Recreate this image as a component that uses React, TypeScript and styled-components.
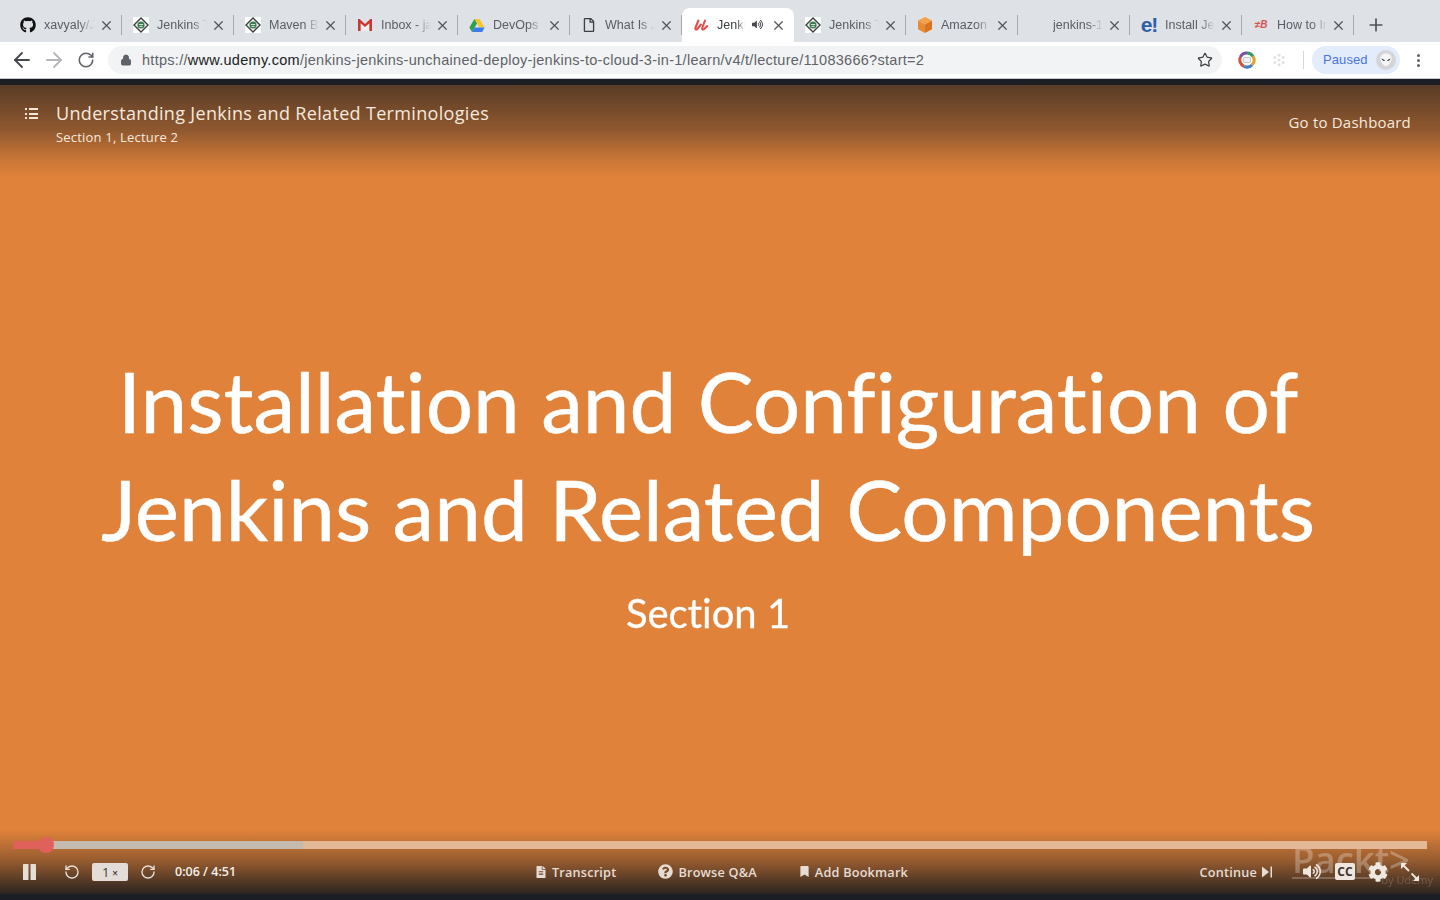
import React from "react";
import styled, { createGlobalStyle } from "styled-components";
import { X, ArrowLeft, ArrowRight, RotateCw, RotateCcw, Star, Plus, Lock } from "lucide-react";
import { FaGithub, FaRegFile, FaFileAlt, FaQuestionCircle, FaBookmark, FaCog, FaVolumeUp } from "react-icons/fa";

const Global = createGlobalStyle`
  html, body { margin: 0; padding: 0; height: 100%; overflow: hidden; background: #14181d; }
  #root { height: 100%; }
`;

const Page = styled.div`
  width: 1440px; height: 900px; display: flex; flex-direction: column;
  background: #161a20; font-family: "Open Sans", sans-serif;
`;
const TabBar = styled.div`
  height: 42px; box-sizing: border-box; padding: 8px 0 0 9px; background: #dee1e6;
  display: flex; align-items: stretch; flex: none;
`;
const Tab = styled.div<{ $active?: boolean }>`
  width: 112px; height: 34px; box-sizing: border-box; position: relative; flex: none;
  display: flex; align-items: center; padding-left: 11px;
  background: ${p => (p.$active ? "#fff" : "transparent")};
  border-radius: ${p => (p.$active ? "8px 8px 0 0" : "0")};
  &:first-child { width: 113px; }
  &::after {
    content: ""; position: absolute; right: 0; top: 7px; width: 1px; height: 20px;
    background: ${p => (p.$active ? "transparent" : "#a5a8ad")};
  }
`;
const Favicon = styled.span`
  width: 16px; height: 16px; flex: none; display: flex; align-items: center; justify-content: center;
`;
const TabTitle = styled.span<{ $w: number; $active?: boolean }>`
  width: ${p => p.$w}px; margin-left: 8px; overflow: hidden; white-space: nowrap; flex: none;
  font: 12.5px/16px "Liberation Sans", sans-serif; color: ${p => (p.$active ? "#3c4043" : "#5a5e63")};
  -webkit-mask-image: linear-gradient(90deg, #000 70%, transparent 100%);
  mask-image: linear-gradient(90deg, #000 70%, transparent 100%);
`;
const TabClose = styled.span`
  position: absolute; right: 8px; top: 9px; width: 16px; height: 16px; display: flex; align-items: center; justify-content: center; color: #55585c;
`;
const Speaker = styled.span`
  position: absolute; left: 70px; top: 11px; width: 12px; height: 12px; display: flex; color: #45484c;
`;
const NewTab = styled.span`
  width: 44px; height: 34px; display: flex; align-items: center; justify-content: center; color: #4f5357; flex: none;
`;
const LetterIcon = styled.span`
  font: bold 21px/16px "Liberation Sans", sans-serif; color: #2f5fa8; letter-spacing: -1px;
`;
const RedB = styled.span`
  font: italic bold 10px/16px "Liberation Sans", sans-serif; color: #d9534f;
`;
const ToolBar = styled.div`
  height: 36px; background: #fff; flex: none; display: flex; align-items: center; padding-left: 6px;
  border-bottom: 1px solid #c6c8cb;
`;
const NavButton = styled.span<{ $muted?: boolean }>`
  width: 32px; height: 24px; display: flex; align-items: center; justify-content: center; flex: none;
  color: ${p => (p.$muted ? "#b4b6b9" : "#5f6368")};
`;
const UrlPill = styled.div`
  margin-left: 6px; width: 1114px; height: 28px; border-radius: 14px; background: #f1f3f4; flex: none;
  display: flex; align-items: center; padding: 0 9px 0 12px; box-sizing: border-box;
`;
const LockSlot = styled.span`
  width: 12px; display: flex; color: #5f6368; margin-right: 10px;
`;
const Url = styled.span`
  flex: 1; font: 14.5px/28px "Liberation Sans", sans-serif; color: #5f6368; white-space: nowrap; letter-spacing: .28px;
  b { font-weight: 400; color: #202124; }
`;
const ExtSlot = styled.span<{ $ml: number }>`
  width: 18px; height: 18px; margin-left: ${p => p.$ml}px; display: flex; flex: none;
`;
const ToolSep = styled.span`
  width: 1px; height: 18px; background: #d4d6d8; margin-left: 15px; flex: none;
`;
const PausedPill = styled.div`
  margin-left: 8px; width: 88px; height: 28px; border-radius: 14px; background: #e3ecfb; flex: none;
  display: flex; align-items: center; justify-content: space-between; padding: 0 4px 0 11px; box-sizing: border-box;
  font: 13px/28px "Liberation Sans", sans-serif; color: #4a74e0; letter-spacing: .1px;
`;
const Avatar = styled.span`
  width: 20px; height: 20px; display: flex;
`;
const Dots = styled.span`
  width: 3px; height: 13px; margin-left: 17px; display: flex; flex-direction: column; justify-content: space-between;
  i { width: 3px; height: 3px; border-radius: 50%; background: #5f6368; display: block; }
`;
const Strip = styled.div`
  height: 6px; background: #1b1f25; flex: none;
`;
const Video = styled.main`
  flex: 1; min-height: 0; position: relative; display: flex; flex-direction: column; color: #fff;
  background:
    linear-gradient(180deg, rgba(89,60,39,1) 0, rgba(89,60,39,.6) 45px, rgba(89,60,39,.2) 72px, rgba(89,60,39,0) 92px),
    linear-gradient(0deg, rgba(43,36,32,1) 0, rgba(43,36,32,.4) 34px, rgba(43,36,32,0) 64px),
    #e0823a;
`;
const Header = styled.header`
  display: flex; justify-content: space-between; padding: 16px 29px 0 25px; flex: none;
`;
const TitleWrap = styled.div`
  display: flex; gap: 18px;
`;
const ListIcon = styled.span`
  width: 13px; height: 11px; margin-top: 7px; display: flex; flex-direction: column; justify-content: space-between; flex: none;
  i { display: block; height: 2px; background: linear-gradient(90deg, #f6e6d8 2.5px, transparent 2.5px, transparent 4.5px, #f6e6d8 4.5px); }
`;
const LectureTitle = styled.div`
  font-size: 18px; line-height: 24px; color: #f6e9de; white-space: nowrap; letter-spacing: .33px;
`;
const LectureSub = styled.div`
  font-size: 13px; line-height: 18px; margin-top: 3px; color: #f6e9de; white-space: nowrap; letter-spacing: .2px;
`;
const Dashboard = styled.div`
  font-size: 15px; line-height: 20px; margin-top: 11px; color: #f6e9de; white-space: nowrap; letter-spacing: .2px;
`;
const Slide = styled.section`
  flex: 1; min-height: 0; display: flex; flex-direction: column; align-items: center;
  padding: 202px 24px 0 0; font-family: Lato, sans-serif; filter: blur(.7px);
  font-variant-ligatures: none; -webkit-text-stroke: .5px #fff;
`;
const SlideLine = styled.div`
  font-size: 83.7px; line-height: 108px; white-space: nowrap; color: #fff; margin-top: -1px; margin-bottom: 1px;
`;
const SlideSub = styled.div`
  font-size: 40px; line-height: 50px; margin-top: 24px; color: #fff; white-space: nowrap; -webkit-text-stroke: .3px #fff;
`;
const Track = styled.div`
  height: 8px; margin: 0 13px; background: #e3b897; position: relative; flex: none;
`;
const Buffered = styled.div`
  height: 8px; background: #c5bab0;
`;
const Played = styled.div`
  position: absolute; left: 0; top: 0; height: 8px; background: #e0605c;
`;
const Knob = styled.div`
  position: absolute; top: -4px; width: 16px; height: 16px; margin-left: -8px; border-radius: 50%; background: #e0605c;
`;
const Controls = styled.div`
  height: 45px; flex: none; display: grid; grid-template-columns: 1fr auto 1fr; align-items: center; padding: 0 20px 0 23px;
  font-size: 12.7px; font-weight: 600; color: #e6dcd3;
`;
const LeftGroup = styled.div`
  display: flex; align-items: center;
`;
const CenterGroup = styled.div`
  display: flex; align-items: center; gap: 42px;
`;
const RightGroup = styled.div`
  display: flex; align-items: center; justify-content: flex-end; position: relative; z-index: 1;
`;
const IconSlot = styled.span<{ $ml?: number; $w?: number }>`
  display: flex; margin-left: ${p => p.$ml ?? 0}px; width: ${p => p.$w ?? 16}px; flex: none; align-items: center; justify-content: center;
`;
const Speed = styled.span`
  width: 36px; height: 18px; margin-left: 12px; border-radius: 2px; background: #e3dcd7; color: #3f3a36;
  font-size: 13px; font-weight: 400; line-height: 18px; text-align: center; flex: none;
  small { font-size: 10px; font-weight: 600; margin-left: 3px; }
`;
const Time = styled.span`
  margin-left: 19px; color: #f4efe9; white-space: nowrap; font-size: 12.5px;
`;
const Action = styled.span`
  display: flex; align-items: center; gap: 5px; white-space: nowrap; letter-spacing: .2px;
`;
const CC = styled.span`
  margin-left: 14px; width: 20px; height: 17px; border-radius: 2px; background: #eee7e0; color: #3b342f;
  font: bold 12px/17px "Open Sans", sans-serif; text-align: center; flex: none;
`;
const Watermark = styled.div`
  position: absolute; right: 30px; bottom: 16px; font: 600 36.5px/38px "Open Sans", sans-serif; color: rgba(255,255,255,.27);
  white-space: nowrap; filter: blur(.5px);
  &::after { content: ""; position: absolute; left: 0; right: 25px; bottom: -1px; height: 2px; background: rgba(255,255,255,.22); }
  small { position: absolute; right: -23px; bottom: -8px; font-size: 11px; font-weight: 400; line-height: 12px; color: rgba(255,255,255,.18); }
`;

const JenkinsIcon = () => (
  <svg width="16" height="16" viewBox="0 0 16 16">
    <rect width="16" height="16" fill="#fff" />
    <path d="M8 1 15 8 8 15 1 8Z" fill="#f4f4f4" stroke="#3d3f40" strokeWidth="1.4" />
    <circle cx="8" cy="8" r="3.6" fill="#3f7d52" />
    <path d="M6 7.5h4M6.5 9.5h3" stroke="#dfeee4" strokeWidth=".9" />
  </svg>
);
const GmailIcon = () => (
  <svg width="16" height="14" viewBox="0 0 16 14">
    <path d="M3.600 13V5.200L8 9l4.400-3.800V13Z" fill="#eeeeee" />
    <path d="M1 13V1h1.600L8 6l5.400-5H15v12h-2.600V5.200L8 9 3.600 5.200V13Z" fill="#c8382e" />
  </svg>
);
const DriveIcon = () => (
  <svg width="16" height="15" viewBox="0 0 16 15">
    <path d="M5.400 1h5.200l5 8.600h-5.200Z" fill="#f7c52b" />
    <path d="M5.400 1 .4 9.600 3 14l5-8.600Z" fill="#2ba24c" />
    <path d="M3 14h10.200l2.400-4.400H5.400Z" fill="#3b7ded" />
  </svg>
);
const UdemyIcon = () => (
  <svg width="16" height="16" viewBox="0 0 16 16" fill="none" stroke="#e2504c" strokeWidth="2.1" strokeLinecap="round" strokeLinejoin="round">
    <path d="M5.400 3.500 2.400 11c-.5 1.500 1 2 2 1L8 7.500" />
    <path d="M12 3.500 9.200 11c-.5 1.500.8 2 2 1l3-3" />
  </svg>
);
const CubeIcon = () => (
  <svg width="16" height="16" viewBox="0 0 16 16">
    <path d="M8 0 15 3.600 8 7.400 1 3.600Z" fill="#f5a04b" />
    <path d="M1 3.600 8 7.400V16L1 12.200Z" fill="#ea8b33" />
    <path d="M15 3.600 8 7.400V16l7-3.800Z" fill="#d67422" />
  </svg>
);
const ChromeExt = () => (
  <svg width="18" height="18" viewBox="0 0 18 18" fill="none" strokeWidth="3">
    <path d="M9 2a7 7 0 0 1 6 3.400" stroke="#2f9e57" />
    <path d="M15 5.400A7 7 0 0 1 14 14" stroke="#e2a12a" />
    <path d="M14 14a7 7 0 0 1-8 1.300" stroke="#3b7fc4" />
    <path d="M6 15.300A7 7 0 0 1 2.400 6" stroke="#d8503f" />
    <path d="M2.400 6A7 7 0 0 1 9 2" stroke="#7c4aa8" />
    <rect x="5.500" y="6.500" width="7" height="5" rx="1" fill="#f2f2f2" stroke="#b5b5b5" strokeWidth=".8" />
  </svg>
);
const FlakeExt = () => (
  <svg width="18" height="18" viewBox="0 0 18 18" fill="#e0e1e2">
    {[0, 60, 120, 180, 240, 300].map(a => (
      <circle key={a} cx={9 + 4.800 * Math.cos(((a + 30) * Math.PI) / 180)} cy={9 + 4.800 * Math.sin(((a + 30) * Math.PI) / 180)} r="1.500" />
    ))}
    <circle cx="9" cy="9" r="1.600" />
  </svg>
);
const AlienAvatar = () => (
  <svg width="20" height="20" viewBox="0 0 20 20">
    <circle cx="10" cy="10" r="10" fill="#d3d5d7" />
    <path d="M10 3.500c4 0 6.200 2.600 5.600 6-.5 2.800-3.500 6.700-5.600 6.700S4.900 12.300 4.400 9.500C3.800 6.100 6 3.500 10 3.500Z" fill="#f5f5f5" />
    <path d="M5.500 8.500l3.500 1.800c-.4 1.100-2.700.6-3.500-1.800ZM14.500 8.500 11 10.300c.4 1.100 2.700.6 3.500-1.800Z" fill="#222" />
  </svg>
);
const SkipIcon = () => (
  <svg width="10" height="12" viewBox="0 0 10 12" fill="#e6dcd3">
    <path d="M0 0.500 7 6 0 11.500Z" />
    <rect x="8.500" y="0.500" width="1.500" height="11" />
  </svg>
);
const PauseIcon = () => (
  <svg width="13" height="16" viewBox="0 0 13 16" fill="#e6ddd5">
    <rect x="0" y="0" width="5.500" height="16" rx=".5" />
    <rect x="7.500" y="0" width="5.500" height="16" rx=".5" />
  </svg>
);
const ExpandIcon = () => (
  <svg width="20" height="20" viewBox="0 0 20 20" fill="none" stroke="#efe8e1" strokeWidth="1.800">
    <path d="M3 3 9 9M17 17 11.500 11.500" />
    <path d="M1 7V1h6ZM19 13v6h-6Z" fill="#efe8e1" stroke="none" />
  </svg>
);

const Blank = styled.span``;

type TabData = { title: string; icon: React.ReactNode };
const before: TabData[] = [
  { title: "xavyaly/Jenkins", icon: <FaGithub size={16} color="#111" /> },
  { title: "Jenkins Tutorial", icon: <JenkinsIcon /> },
  { title: "Maven Build", icon: <JenkinsIcon /> },
  { title: "Inbox - jack", icon: <GmailIcon /> },
  { title: "DevOps Drive", icon: <DriveIcon /> },
  { title: "What Is Jenkins", icon: <FaRegFile size={14} color="#3c4043" /> },
];
const after: TabData[] = [
  { title: "Jenkins Tutorial", icon: <JenkinsIcon /> },
  { title: "Amazon Web", icon: <CubeIcon /> },
  { title: "jenkins-1", icon: <Blank /> },
  { title: "Install Jenkins", icon: <LetterIcon>e!</LetterIcon> },
  { title: "How to Install", icon: <RedB>≠B</RedB> },
];

const ChromeTab = ({ t }: { t: TabData }) => (
  <Tab>
    <Favicon>{t.icon}</Favicon>
    <TabTitle $w={50}>{t.title}</TabTitle>
    <TabClose><X size={15} strokeWidth={1.9} /></TabClose>
  </Tab>
);

export default function App() {
  return (
    <Page>
      <Global />
      <TabBar>
        {before.map(t => <ChromeTab key={t.title} t={t} />)}
        <Tab $active>
          <Favicon><UdemyIcon /></Favicon>
          <TabTitle $w={28} $active>Jenkins</TabTitle>
          <Speaker><FaVolumeUp size={11} /></Speaker>
          <TabClose><X size={15} strokeWidth={1.9} /></TabClose>
        </Tab>
        {after.map(t => <ChromeTab key={t.title} t={t} />)}
        <NewTab><Plus size={20} strokeWidth={2} /></NewTab>
      </TabBar>
      <ToolBar>
        <NavButton><ArrowLeft size={24} strokeWidth={1.8} color="#45484c" /></NavButton>
        <NavButton $muted><ArrowRight size={24} strokeWidth={1.8} /></NavButton>
        <NavButton><RotateCw size={18} strokeWidth={2.1} /></NavButton>
        <UrlPill>
          <LockSlot><Lock size={12} fill="#5f6368" /></LockSlot>
          <Url>https://<b>www.udemy.com</b>/jenkins-jenkins-unchained-deploy-jenkins-to-cloud-3-in-1/learn/v4/t/lecture/11083666?start=2</Url>
          <Star size={16} strokeWidth={1.8} color="#3c4043" />
        </UrlPill>
        <ExtSlot $ml={16}><ChromeExt /></ExtSlot>
        <ExtSlot $ml={14}><FlakeExt /></ExtSlot>
        <ToolSep />
        <PausedPill>
          Paused
          <Avatar><AlienAvatar /></Avatar>
        </PausedPill>
        <Dots><i /><i /><i /></Dots>
      </ToolBar>
      <Strip />
      <Video>
        <Header>
          <TitleWrap>
            <ListIcon><i /><i /><i /></ListIcon>
            <div>
              <LectureTitle>Understanding Jenkins and Related Terminologies</LectureTitle>
              <LectureSub>Section 1, Lecture 2</LectureSub>
            </div>
          </TitleWrap>
          <Dashboard>Go to Dashboard</Dashboard>
        </Header>
        <Slide>
          <SlideLine>Installation and Configuration of</SlideLine>
          <SlideLine>Jenkins and Related Components</SlideLine>
          <SlideSub>Section 1</SlideSub>
        </Slide>
        <Watermark>Packt&gt;<small>by Udemy</small></Watermark>
        <Track>
          <Buffered style={{ width: 290 }} />
          <Played style={{ width: 33 }} />
          <Knob style={{ left: 33 }} />
        </Track>
        <Controls>
          <LeftGroup>
            <IconSlot $w={13}><PauseIcon /></IconSlot>
            <IconSlot $ml={28}><RotateCcw size={18} strokeWidth={2.1} color="#e6ddd5" /></IconSlot>
            <Speed>1<small>×</small></Speed>
            <IconSlot $ml={12}><RotateCw size={18} strokeWidth={2.1} color="#e6ddd5" /></IconSlot>
            <Time>0:06 / 4:51</Time>
          </LeftGroup>
          <CenterGroup>
            <Action><FaFileAlt size={12} />Transcript</Action>
            <Action><FaQuestionCircle size={15} />Browse Q&amp;A</Action>
            <Action><FaBookmark size={11} />Add Bookmark</Action>
          </CenterGroup>
          <RightGroup>
            <Action>Continue <SkipIcon /></Action>
            <IconSlot $ml={31} $w={18}><FaVolumeUp size={19} color="#efe8e1" /></IconSlot>
            <CC>CC</CC>
            <IconSlot $ml={13} $w={20}><FaCog size={20} color="#efe8e1" /></IconSlot>
            <IconSlot $ml={12} $w={20}><ExpandIcon /></IconSlot>
          </RightGroup>
        </Controls>
      </Video>
      <Strip />
    </Page>
  );
}
